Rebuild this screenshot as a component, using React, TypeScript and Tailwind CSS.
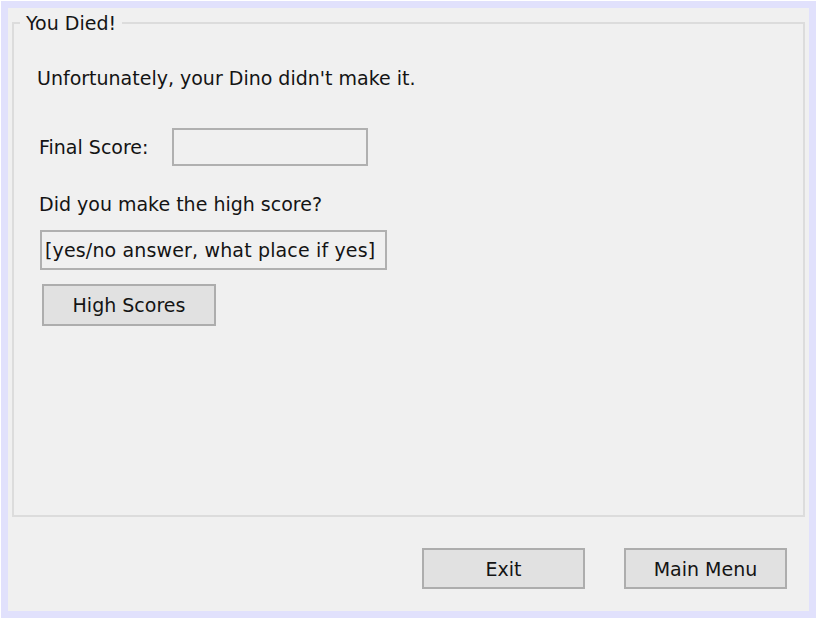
export default function App() {
  return (
    <div className="h-[620px] w-[820px] bg-white p-px font-['DejaVu_Sans',Verdana,sans-serif] text-[19px] leading-[24px] text-[#141414]">
      <div className="flex h-[617px] w-[815px] flex-col border-[7px] border-[#e1e1fc] bg-[#f0f0f0]">
        {/* group box */}
        <fieldset className="ml-[4px] mr-[4px] mt-[3px] h-[506px] border-2 border-[#dcdcdc] p-0">
          <legend className="ml-[6px] px-[6px]">You Died!</legend>

          <div className="pl-[23px]">
            <p className="mt-[31px]">Unfortunately, your Dino didn't make it.</p>

            <div className="mt-[38px] flex items-center">
              <span className="ml-[2px] w-[133px]">Final Score:</span>
              <div className="h-[38px] w-[196px] border-2 border-[#b0b0b0]" />
            </div>

            <p className="ml-[2px] mt-[26px]">Did you make the high score?</p>

            <div className="ml-[3px] mt-[14px] flex h-[40px] w-[347px] items-center whitespace-nowrap border-2 border-[#b0b0b0] px-[3px] tracking-[0.15px]">
              [yes/no answer, what place if yes]
            </div>

            <button className="ml-[5px] mt-[14px] h-[42px] w-[174px] border-2 border-[#adadad] bg-[#e1e1e1] text-center">
              High Scores
            </button>
          </div>
        </fieldset>

        {/* dialog buttons */}
        <div className="mt-[31px] flex justify-end gap-[39px] pr-[22px]">
          <button className="h-[41px] w-[163px] border-2 border-[#adadad] bg-[#e1e1e1]">Exit</button>
          <button className="h-[41px] w-[163px] border-2 border-[#adadad] bg-[#e1e1e1]">Main Menu</button>
        </div>
      </div>
    </div>
  );
}
